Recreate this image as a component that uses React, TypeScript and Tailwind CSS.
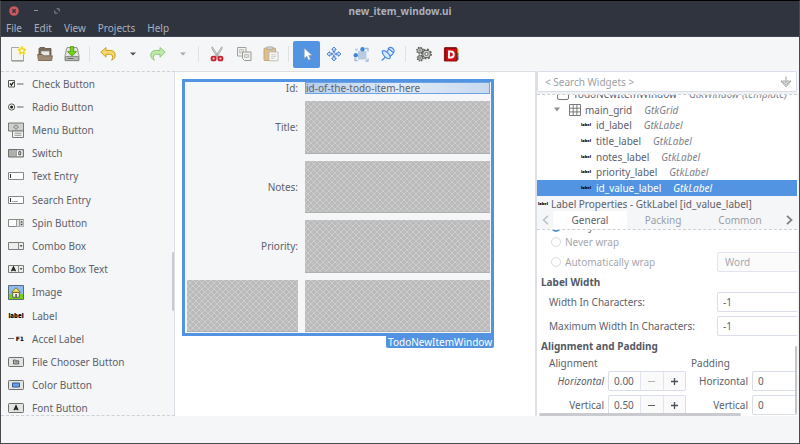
import React from "react";

const svgBase = { xmlns: "http://www.w3.org/2000/svg", "aria-hidden": true } as const;

/* ---------- toolbar icons, 16 x 16 ---------- */

const toolIcons: Record<string, React.ReactNode> = {
  new: (
    <>
      <path d="M1.5 1.5h12v13.5h-12z" fill="#f4f4f2" stroke="#a9aaa6" />
      <path d="M2 14.8h11.5" stroke="#8c8d89" />
      <circle cx="12" cy="4.5" r="4.3" fill="#fdf3a0" />
      <path d="M12 1l1 2.2 2.4.3-1.7 1.7.4 2.4L12 6.5 9.9 7.6l.4-2.4-1.7-1.7 2.4-.3z" fill="#fffef0" stroke="#f0cf1c" strokeWidth="1.2" />
    </>
  ),
  open: (
    <>
      <path d="M2 2.5l1-1h4.5l1 1H14V9H2z" fill="#7a6a58" stroke="#5f5142" strokeWidth=".8" />
      <path d="M4 5h8.5v6H4z" fill="#e8e8e6" stroke="#8a8a86" strokeWidth=".7" />
      <path d="M.6 8.5h5l1.2 1.3h8.6l-.8 4.7H1.5z" fill="#a08c74" stroke="#6b5b49" strokeWidth=".8" />
    </>
  ),
  save: (
    <>
      <path d="M3 1.5h10l2 8v5.2H1V9.5z" fill="#e2e3e0" stroke="#8f918c" strokeWidth=".9" />
      <path d="M1.5 10.5h13v4h-13z" fill="#b6b8b3" stroke="#7e807b" strokeWidth=".8" />
      <path d="M3.5 12.5h6" stroke="#686a66" />
      <path d="M6.3.6h3.4v5h2.8L8 10.2 3.5 5.6h2.8z" fill="#73d216" stroke="#4e9a06" strokeWidth=".8" />
    </>
  ),
  undo: <path d="M.8 6.2L6 1.5v2.9h4.2c3.2 0 5 1.9 5 4.7 0 2.4-1.3 4.2-3.6 5.1.7-1 1-1.9 1-2.9 0-2-1.1-3-3-3H6v2.9z" fill="#f5d76a" stroke="#c9a01f" strokeWidth="1" strokeLinejoin="round" />,
  redo: <path d="M15.2 6.2L10 1.5v2.9H5.8c-3.2 0-5 1.9-5 4.7 0 2.4 1.3 4.2 3.6 5.1-.7-1-1-1.9-1-2.9 0-2 1.1-3 3-3H10v2.9z" fill="#bfe8a8" stroke="#8fc97c" strokeWidth="1" strokeLinejoin="round" />,
  cut: (
    <>
      <path d="M3.2.8l6.4 9.6-1.4.8L3 2.7zM12.8.8L6.4 10.4l1.4.8L13 2.7z" fill="#eeeeec" stroke="#8b8d89" strokeWidth=".7" />
      <rect x="2.6" y="10.6" width="4" height="3.8" rx="1.6" fill="#f4c9c9" stroke="#cc1f2b" strokeWidth="1.9" />
      <rect x="9.4" y="10.6" width="4" height="3.8" rx="1.6" fill="#f4c9c9" stroke="#cc1f2b" strokeWidth="1.9" />
    </>
  ),
  copy: (
    <>
      <path d="M1.5 1.5h8.5v8.5H1.5z" fill="#f3f3f1" stroke="#a0a19d" />
      <path d="M3.5 3.5h4v3.5h-4z" fill="#dcdcda" stroke="#b6b7b3" strokeWidth=".7" />
      <path d="M6.5 6h8.5v8.5H8.5l-2-2z" fill="#f3f3f1" stroke="#989995" />
      <path d="M8.5 8.5h4.2v3H8.5z" fill="#dcdcda" stroke="#b0b1ad" strokeWidth=".7" />
    </>
  ),
  paste: (
    <>
      <rect x="1" y="2" width="11.5" height="12.5" rx="1" fill="#ddbf8d" stroke="#c7a672" />
      <path d="M4 .8h5.5v2.7H4z" fill="#cfcfcd" stroke="#a6a6a3" strokeWidth=".7" />
      <path d="M6 6h9v8.8H6z" fill="#f7f7f6" stroke="#b5b5b2" strokeWidth=".8" />
      <path d="M8 8.8h5M8 10.6h5M8 12.4h3.5" stroke="#c5c5c2" strokeWidth=".8" />
    </>
  ),
  select: <path d="M5.2 2v10.6l2.6-2.3 1.7 3.9 2-.9-1.7-3.8h3.4z" fill="#fff" stroke="#8a97a8" strokeWidth=".7" />,
  drag: (
    <g fill="#d7e6f8" stroke="#4a86d0" strokeWidth="1" strokeLinejoin="round">
      <path d="M8 1l2.3 2.6H9v2H7v-2H5.700z" />
      <path d="M8 15l2.300-2.600H9v-2H7v2H5.700z" />
      <path d="M1 8l2.600-2.300V7h2v2h-2v1.300z" />
      <path d="M15 8l-2.600-2.300V7h-2v2h2v1.300z" />
      <path d="M8 6.200L9.800 8 8 9.800 6.200 8z" />
    </g>
  ),
  margin: (
    <>
      <path d="M5 5h8.500v8.500H5z" fill="#b9cbe3" />
      <path d="M12 2.500h3v3M2 12v2.500h2.500M12.500 15h2.500v-2.500" stroke="#9fb7d8" strokeWidth="1.300" fill="none" />
      <path d="M2 3.500h3M3 4.500h1" stroke="#b9cbe3" strokeWidth="1.300" />
      <circle cx="9.500" cy="3.200" r="2.200" fill="#4286dc" />
      <circle cx="2.800" cy="9.300" r="2.200" fill="#4286dc" />
    </>
  ),
  pin: (
    <g fill="#d9e8fa" stroke="#4a8ae0" strokeWidth="1.200" strokeLinejoin="round" strokeLinecap="round">
      <path d="M6.500 10L2 14.200" />
      <path d="M8.200 2.500c1-1.500 3-1.500 4.400-.2 1.500 1.400 2 3.300.8 4.500z" />
      <path d="M8.500 3.500L6.600 6.200l3.900 3.900 2.600-2.300" />
      <path d="M2.200 5.200c1.200-1 3.600-.4 5.600 1.600s2.900 4.500 1.900 5.900c-2 .3-3.600-.6-5-2.100-1.500-1.500-2.500-3.400-2.500-5.400z" />
    </g>
  ),
  gears: (
    <g fill="none" stroke="#5d5f5c">
      <circle cx="4" cy="4.500" r="2.600" fill="#d4d5d2" strokeWidth="1" />
      <circle cx="4" cy="4.500" r="3.300" strokeWidth="1.200" strokeDasharray="1.300 1.300" />
      <circle cx="10.500" cy="8" r="3.800" fill="#d4d5d2" strokeWidth="1.100" />
      <circle cx="10.500" cy="8" r="4.700" strokeWidth="1.500" strokeDasharray="1.850 1.850" />
      <circle cx="10.500" cy="8" r="1.600" fill="#fff" strokeWidth="1" />
      <circle cx="4.200" cy="12" r="2.300" fill="#d4d5d2" strokeWidth="1" />
      <circle cx="4.200" cy="12" r="3" strokeWidth="1.200" strokeDasharray="1.200 1.200" />
      <circle cx="4" cy="4.500" r=".8" fill="#fff" strokeWidth=".8" />
      <circle cx="4.200" cy="12" r=".7" fill="#fff" strokeWidth=".8" />
    </g>
  ),
  devhelp: (
    <>
      <path d="M13 2l2.500 1v3.500L13 7z" fill="#e8b31a" />
      <path d="M13 6.500l2.500.3v3.200l-2.500.5z" fill="#3b9a3b" />
      <path d="M13 10.500l2.500-.4V14L13 15z" fill="#2c5fb0" />
      <path d="M1.500 1.200h12V3h-12z" fill="#6e1010" />
      <path d="M1.400 2.200h12.400V15H1.400z" fill="#d40d12" stroke="#7c0b0e" strokeWidth=".9" />
      <path d="M2.600 3v11.500" stroke="#7c0b0e" strokeWidth="1" />
      <path d="M6 5.500h1.800a3 3 0 0 1 0 6H6z" fill="none" stroke="#fff" strokeWidth="1.900" />
    </>
  ),
};

function Tool({ name, label, active }: { name: string; label: string; active?: boolean }) {
  return (
    <button
      type="button"
      aria-label={label}
      className={
        "flex h-[27px] w-[27px] shrink-0 items-center justify-center rounded-xs " + (active ? "bg-[#5294e2]" : "")
      }
    >
      <svg {...svgBase} viewBox="0 0 16 16" className="size-4">
        {toolIcons[name]}
      </svg>
    </button>
  );
}

function ToolArrow({ label, dim }: { label: string; dim?: boolean }) {
  return (
    <button type="button" aria-label={label} className="flex h-[27px] w-[23px] shrink-0 items-center justify-center">
      <svg {...svgBase} viewBox="0 0 6 4" className="h-1 w-1.5">
        <path d="M0 .5h6L3 3.500z" fill={dim ? "#a3a8b0" : "#4a4f5c"} />
      </svg>
    </button>
  );
}

const ToolSeparator = () => (
  <div className="flex w-[9px] shrink-0 justify-center">
    <span className="h-4 w-px bg-[#dfe1e4]" />
  </div>
);

/* ---------- palette icons, 16 x 16 ---------- */

const box = "#6d6f6c";

const paletteIcons: Record<string, React.ReactNode> = {
  check: (
    <>
      <path d="M.5 4.500h6v6.500h-6z" fill="#fff" stroke="#555753" />
      <path d="M2 7.500l1.500 1.700L5.500 6" fill="none" stroke="#1e1f1d" strokeWidth="1.400" />
      <path d="M9 8h6.500" stroke="#7b7d79" strokeWidth="1.200" />
    </>
  ),
  radio: (
    <>
      <circle cx="3.600" cy="8" r="3.100" fill="#fff" stroke="#555753" />
      <circle cx="3.600" cy="8" r="1.500" fill="#1e1f1d" />
      <path d="M9 8h6.500" stroke="#7b7d79" strokeWidth="1.200" />
    </>
  ),
  menu: (
    <>
      <path d="M.5 1h15v8H.500z" fill="#d0d1cf" stroke="#777975" />
      <path d="M8 2.700l2.500 2.300L8 7.300 5.500 5z" fill="#c2c4c0" stroke="#777975" strokeWidth=".9" />
      <path d="M4.500 9h11v6.500h-11z" fill="#f5f5f4" stroke="#777975" />
      <path d="M6.500 11.200h7M6.500 13.300h7" stroke="#888a86" strokeWidth=".9" />
    </>
  ),
  switch: (
    <>
      <path d="M.5 4.500h15v7.500H.500z" fill="#aeb0ac" stroke={box} />
      <path d="M8.500 5h6.500v6.500H8.500z" fill="#fff" stroke="#888a85" strokeWidth=".7" />
      <path d="M10.800 6.700h2v3.200h-2z" fill="none" stroke="#333" strokeWidth=".9" />
    </>
  ),
  entry: (
    <>
      <path d="M.5 4.500h15v7H.500z" fill="#fff" stroke="#868884" />
      <path d="M2.500 6v4" stroke="#2e3436" />
    </>
  ),
  search: (
    <>
      <path d="M.5 4.500h15v7H.500z" fill="#fff" stroke="#868884" />
      <path d="M2.500 6v4" stroke="#2e3436" />
      <path d="M4.500 9.500h6" stroke="#555" strokeDasharray="1 1" />
    </>
  ),
  spin: (
    <>
      <path d="M.5 4.500h15v7H.500z" fill="#fff" stroke="#868884" />
      <path d="M8 5h7.500v6.500H8z" fill="#e3e3e1" />
      <path d="M8.500 5v6.500M11.500 5v6.500M12 8h3.500" stroke="#888a85" strokeWidth=".8" />
      <path d="M12.300 7.300l1.300-1.500 1.300 1.500zM12.300 9l1.300 1.500L14.900 9z" fill="#444" />
    </>
  ),
  combo: (
    <>
      <path d="M.5 4.500h15v7H.500z" fill="#eeeeec" stroke="#7b7d79" />
      <path d="M10.500 5v6.500" stroke="#888a85" />
      <path d="M11.700 7.200h2.800L13.100 9z" fill="#222" />
    </>
  ),
  combotext: (
    <>
      <path d="M.5 4.500h15v7H.500z" fill="#eeeeec" stroke="#7b7d79" />
      <path d="M10.500 5v6.500" stroke="#888a85" />
      <path d="M11.700 7.200h2.800L13.100 9z" fill="#222" />
      <path d="M3.500 10.300L5.500 6l2 4.300M4.200 9h2.600" fill="none" stroke="#1e1f1d" strokeWidth="1.300" />
    </>
  ),
  image: (
    <>
      <path d="M.5 1.500h15v14H.500z" fill="#8fbcf0" stroke="#5a6b73" />
      <path d="M1 10h14v5H1z" fill="#73d216" />
      <path d="M4.700 8.500h6.600v4.800H4.700z" fill="#f6f3df" stroke="#555753" strokeWidth=".9" />
      <path d="M8 3.700l4.500 4.600h-9z" fill="#f6e05a" stroke="#77682a" strokeWidth=".9" />
      <path d="M7.200 10h1.800v3.300H7.200z" fill="#666" />
    </>
  ),
  filechooser: (
    <>
      <rect x=".5" y="3.500" width="15" height="9" rx=".8" fill="#e4e5e3" stroke="#6d6f6c" />
      <path d="M5.500 6h2l.6.8h2.600V10H5.500z" fill="#b9bab7" stroke="#555753" strokeWidth=".9" />
      <path d="M7 8h2.500" stroke="#555753" strokeWidth=".7" />
    </>
  ),
  color: (
    <>
      <rect x=".5" y="3.500" width="15" height="9" rx=".8" fill="#e4e5e3" stroke="#6d6f6c" />
      <path d="M4.500 6h7v4h-7z" fill="#6f9fd8" stroke="#2c5a9c" />
    </>
  ),
  font: (
    <>
      <rect x=".5" y="3.500" width="15" height="9" rx=".8" fill="#e4e5e3" stroke="#6d6f6c" />
      <path d="M6 10.300L8 5.900l2 4.400M6.700 9h2.600" fill="none" stroke="#1e1f1d" strokeWidth="1.300" />
    </>
  ),
};

const palette: [string, string][] = [
  ["check", "Check Button"],
  ["radio", "Radio Button"],
  ["menu", "Menu Button"],
  ["switch", "Switch"],
  ["entry", "Text Entry"],
  ["search", "Search Entry"],
  ["spin", "Spin Button"],
  ["combo", "Combo Box"],
  ["combotext", "Combo Box Text"],
  ["image", "Image"],
  ["label", "Label"],
  ["accel", "Accel Label"],
  ["filechooser", "File Chooser Button"],
  ["color", "Color Button"],
  ["font", "Font Button"],
];

function PaletteIcon({ name }: { name: string }) {
  if (name === "label")
    return <span className="flex w-4 justify-center text-[6px] font-black text-black">label</span>;
  if (name === "accel")
    return (
      <span className="flex w-4 items-center justify-between font-['DejaVu_Sans'] text-[6px] font-bold text-black">
        <i className="h-px w-1.5 bg-[#666]" />
        F1
      </span>
    );
  return (
    <svg {...svgBase} viewBox="0 0 16 16" className="size-4 shrink-0">
      {paletteIcons[name]}
    </svg>
  );
}

/* ---------- canvas ---------- */

function Placeholder() {
  return (
    <svg {...svgBase} className="h-full w-full border-b border-[#aeb0ae] bg-[#bbbbbb]">
      <defs>
        <pattern id="weave" width="6" height="6" patternUnits="userSpaceOnUse">
          <path d="M0 0l6 6M6 0L0 6" stroke="#d0d0d0" strokeWidth=".8" />
        </pattern>
      </defs>
      <rect width="100%" height="100%" fill="url(#weave)" />
    </svg>
  );
}

function Canvas() {
  return (
    <main className="min-w-0 flex-1 border-t border-[#dcdfe3] bg-white pt-[7px] pl-[7px]">
      <div className="flex w-[312px] flex-col items-end">
        <div className="w-full border-3 border-[#5294e2] bg-[#f5f6f7] pr-px pb-px pl-0.5">
          <div className="grid h-[250px] grid-cols-[111px_1fr] grid-rows-[12px_repeat(4,minmax(0,1fr))] gap-[7px] text-right">
            <span className="self-center leading-3">Id:</span>
            <span className="border border-[#6da3e6] bg-linear-to-r from-[#b4cdec] via-[#e0ecf6] to-[#c8d9ef] text-left leading-[10px]">
              id-of-the-todo-item-here
            </span>
            <span className="self-center">Title:</span>
            <Placeholder />
            <span className="self-center">Notes:</span>
            <Placeholder />
            <span className="self-center">Priority:</span>
            <Placeholder />
            <Placeholder />
            <Placeholder />
          </div>
        </div>
        <span className="rounded-b-xs bg-[#5294e2] px-0.5 leading-3 text-white">TodoNewItemWindow</span>
      </div>
    </main>
  );
}

/* ---------- inspector ---------- */

const tree: [string, string][] = [
  ["id_label", "GtkLabel"],
  ["title_label", "GtkLabel"],
  ["notes_label", "GtkLabel"],
  ["priority_label", "GtkLabel"],
  ["id_value_label", "GtkLabel"],
];

const MiniLabel = () => (
  <span className="w-3 shrink-0 text-center text-[4px] font-black text-black">label</span>
);

function Tree() {
  return (
    <div className="flex h-[102px] shrink-0 flex-col justify-end overflow-hidden border-t border-dashed border-[#cdd0d4] bg-white">
      <ul className="grid h-[110px] shrink-0 auto-rows-fr whitespace-nowrap">
        <li className="flex min-h-0 items-center pl-1">
          <svg {...svgBase} viewBox="0 0 8 5" className="mr-2 h-[5px] w-2">
            <path d="M1 .5h6L4 4.500z" fill="#8c8f96" />
          </svg>
          <span className="mr-1 h-3 w-3 rounded-xs border border-[#777]" />
          TodoNewItemWindow
          <i className="ml-3 text-[#7e828c]">GtkWindow (template)</i>
        </li>
        <li className="flex min-h-0 items-center pl-4">
          <svg {...svgBase} viewBox="0 0 8 5" className="mr-2 h-[5px] w-2">
            <path d="M1 .5h6L4 4.500z" fill="#8c8f96" />
          </svg>
          <svg {...svgBase} viewBox="0 0 12 12" className="mr-1 size-3">
            <path d="M.5 .5h11v11H.500zM4.200 .5v11M7.900 .5v11M.5 4.200h11M.5 7.900h11" fill="#fff" stroke="#6b6d70" strokeWidth=".9" />
          </svg>
          main_grid
          <i className="ml-3 text-[#7e828c]">GtkGrid</i>
        </li>
        {tree.map(([id, type], i) => (
          <li
            key={id}
            className={
              "flex min-h-0 items-center pl-[43px] " + (i === 4 ? "bg-[#5294e2] text-white" : "")
            }
          >
            <MiniLabel />
            <span className="ml-1">{id}</span>
            <i className={"ml-3 " + (i === 4 ? "text-white" : "text-[#7e828c]")}>{type}</i>
          </li>
        ))}
      </ul>
    </div>
  );
}

const field = "h-5 rounded-xs border border-[#dadeea] bg-white outline-none";

function Spin({ id, value, dim }: { id: string; value: string; dim?: boolean }) {
  return (
    <div className={"flex w-[78px] overflow-hidden " + field}>
      <input id={id} defaultValue={value} className="w-[31px] pl-[5px] outline-none" />
      <button type="button" aria-label="Decrease" className="flex flex-1 items-center justify-center border-l border-[#e2e5ed] bg-[#fafafb]">
        <span className={"h-px w-[7px] " + (dim ? "bg-[#b0b3ba]" : "bg-[#5c616c]")} />
      </button>
      <button type="button" aria-label="Increase" className="flex flex-1 items-center justify-center border-l border-[#e2e5ed] bg-[#fafafb]">
        <svg {...svgBase} viewBox="0 0 7 7" className="size-[7px]">
          <path d="M0 3.500h7M3.500 0v7" stroke="#4a4f5a" strokeWidth="1.300" />
        </svg>
      </button>
    </div>
  );
}

function Properties() {
  return (
    <div className="relative min-h-0 flex-1 overflow-hidden border-t border-dashed border-[#cdd0d4] bg-white">
      <div className="-mt-3 pl-1">
        <label className="flex h-[14px] items-start gap-1 pl-2.5">
          <input type="radio" name="wrap" defaultChecked className="mt-1 size-2.5 appearance-none rounded-full border-3 border-[#5294e2]" />
          Set by lines
        </label>
        <label className="flex h-5 items-center gap-1 pl-2.5 text-[#a5a8ae]">
          <input type="radio" name="wrap" disabled className="size-2.5 appearance-none rounded-full border border-[#d5dae6]" />
          Never wrap
        </label>
        <div className="flex h-5 items-center text-[#a5a8ae]">
          <label className="flex flex-1 items-center gap-1 pl-2.5">
            <input type="radio" name="wrap" disabled className="size-2.5 appearance-none rounded-full border border-[#d5dae6]" />
            Automatically wrap
          </label>
          <select disabled aria-label="Wrap mode" className="-mr-2 h-5 w-[88px] appearance-none rounded-xs border border-[#e2e5ed] bg-[#fbfbfc] pl-[7px] opacity-100">
            <option>Word</option>
          </select>
        </div>
        <h2 className="leading-5 font-bold text-[#545964]">Label Width</h2>
        <div className="flex h-5 items-center pl-2">
          <label htmlFor="wc" className="flex-1">Width In Characters:</label>
          <input id="wc" defaultValue="-1" className={"-mr-2 w-[88px] pl-[5px] " + field} />
        </div>
        <div className="mt-1 flex h-5 items-center pl-2">
          <label htmlFor="mwc" className="flex-1">Maximum Width In Characters:</label>
          <input id="mwc" defaultValue="-1" className={"-mr-2 w-[88px] pl-[5px] " + field} />
        </div>
        <h2 className="leading-5 font-bold text-[#545964]">Alignment and Padding</h2>
        <div className="grid grid-cols-[138px_1fr] gap-x-1 pl-2 leading-[14px]">
          <h3>Alignment</h3>
          <h3>Padding</h3>
        </div>
        <div className="mt-px grid grid-cols-[63px_78px_58px_1fr] items-center gap-x-1 gap-y-1 text-right">
          <label htmlFor="ah" className="italic">Horizontal</label>
          <Spin id="ah" value="0.00" dim />
          <label htmlFor="ph">Horizontal</label>
          <input id="ph" defaultValue="0" className={"-mr-2 pl-[5px] " + field} />
          <label htmlFor="av">Vertical</label>
          <Spin id="av" value="0.50" />
          <label htmlFor="pv">Vertical</label>
          <input id="pv" defaultValue="0" className={"-mr-2 pl-[5px] " + field} />
        </div>
      </div>
      <span className="absolute bottom-0 left-0.5 h-[3px] w-[202px] rounded-full bg-[#c8cacd]" />
      <span className="absolute right-0 bottom-0.5 h-[68px] w-0.5 rounded-full bg-[#c4c7ca]" />
    </div>
  );
}

function Inspector() {
  return (
    <aside className="flex w-[264px] shrink-0 flex-col border-l-2 border-[#dcdfe6] pr-0.5">
      <label className="flex h-[21px] shrink-0 items-center rounded-xs border border-[#dadeea] bg-white pr-1 pl-[7px]">
        <input type="text" aria-label="Search widgets" placeholder="< Search Widgets >" className="min-w-0 flex-1 outline-none placeholder:text-[#9b9fa6]" />
        <svg {...svgBase} viewBox="0 0 12 12" className="size-3">
          <path d="M6 .5v6M3.500 4L6 6.500 8.500 4M1 5l5 5.800L11 5M1 5h1.500L6 8.800 9.500 5H11" fill="none" stroke="#96989c" strokeWidth="1" />
        </svg>
      </label>
      <div className="h-0.5 shrink-0 bg-[#f0f1f3]" />
      <Tree />
      <div className="flex h-[15px] shrink-0 items-center gap-0.5">
        <MiniLabel />
        Label Properties - GtkLabel [id_value_label]
      </div>
      <div role="tablist" className="flex h-[18px] shrink-0 items-stretch text-[#9a9ea6]">
        <button type="button" aria-label="Previous tabs" className="flex w-4 items-center justify-center">
          <svg {...svgBase} viewBox="0 0 7 10" className="h-2.5 w-[7px]">
            <path d="M6 .8L1.500 5 6 9.200" fill="none" stroke="#bfc2c7" strokeWidth="1.600" />
          </svg>
        </button>
        <button type="button" role="tab" aria-selected="true" className="w-[74px] rounded-t-xs bg-white text-[#5c616c]">
          General
        </button>
        <button type="button" role="tab" className="w-[72px]">Packing</button>
        <button type="button" role="tab" className="flex-1">Common</button>
        <button type="button" aria-label="Next tabs" className="flex w-4 items-center justify-center">
          <svg {...svgBase} viewBox="0 0 7 10" className="h-2.5 w-[7px]">
            <path d="M1 .8L5.500 5 1 9.200" fill="none" stroke="#7d8087" strokeWidth="1.800" />
          </svg>
        </button>
      </div>
      <Properties />
    </aside>
  );
}

/* ---------- window ---------- */

export default function App() {
  return (
    <div className="flex h-screen min-h-[444px] flex-col border border-[#4a4a4d] border-t-black bg-[#f5f6f7] font-['Noto_Sans',sans-serif] text-[10px] leading-4 text-[#5c616c]">
      <header className="h-9 shrink-0 border-b border-[#3d4452] bg-[#2f343f] text-[#a9b0bd]">
        <div className="grid h-[19px] grid-cols-[1fr_auto_1fr] items-center">
          <div className="flex items-center pl-2">
            <button type="button" aria-label="Close" className="mr-[15px]">
              <svg {...svgBase} viewBox="0 0 10 10" className="size-2.5">
                <circle cx="5" cy="5" r="4.800" fill="#cc575d" />
                <path d="M3.300 3.300l3.400 3.400M6.700 3.300L3.300 6.700" stroke="#2f343f" strokeWidth="1.300" />
              </svg>
            </button>
            <button type="button" aria-label="Minimize" className="mr-4 h-px w-1 bg-[#90949e]" />
            <button type="button" aria-label="Maximize">
              <svg {...svgBase} viewBox="0 0 6 6" className="size-1.5">
                <path d="M2.500 .8h2.700v2.700M3.500 5.200H.800V2.500" fill="none" stroke="#90949e" strokeWidth=".9" />
              </svg>
            </button>
          </div>
          <h1 className="font-bold">new_item_window.ui</h1>
          <span />
        </div>
        <nav className="flex gap-3 pl-[5px]">
          {["File", "Edit", "View", "Projects", "Help"].map((m) => (
            <button key={m} type="button">{m}</button>
          ))}
        </nav>
      </header>

      <div role="toolbar" className="flex h-[34px] shrink-0 items-center pl-[3px]">
        <Tool name="new" label="New" />
        <Tool name="open" label="Open" />
        <Tool name="save" label="Save" />
        <ToolSeparator />
        <Tool name="undo" label="Undo" />
        <ToolArrow label="Undo history" />
        <Tool name="redo" label="Redo" />
        <ToolArrow label="Redo history" dim />
        <ToolSeparator />
        <Tool name="cut" label="Cut" />
        <Tool name="copy" label="Copy" />
        <Tool name="paste" label="Paste" />
        <ToolSeparator />
        <Tool name="select" label="Select widgets" active />
        <Tool name="drag" label="Drag and resize" />
        <Tool name="margin" label="Edit margins" />
        <Tool name="pin" label="Edit alignment" />
        <ToolSeparator />
        <Tool name="gears" label="Preferences" />
        <Tool name="devhelp" label="Documentation" />
      </div>

      <div className="flex min-h-0 flex-1">
        <nav className="relative w-[174px] shrink-0 overflow-hidden border-y border-r border-y-[#cdd0d4] border-r-[#dcdfe6] [border-block-style:dashed]">
          <ul className="grid h-[348px] auto-rows-fr">
            {palette.map(([icon, label]) => (
              <li key={label} className="flex min-h-0">
                <button type="button" className="flex flex-1 items-center gap-2 pl-[7px]">
                  <PaletteIcon name={icon} />
                  {label}
                </button>
              </li>
            ))}
          </ul>
          <span className="absolute top-[180px] right-0 h-[59px] w-0.5 rounded-full bg-[#c8cacf]" />
        </nav>
        <Canvas />
        <Inspector />
      </div>

      <footer className="h-[27px] shrink-0" />
    </div>
  );
}
